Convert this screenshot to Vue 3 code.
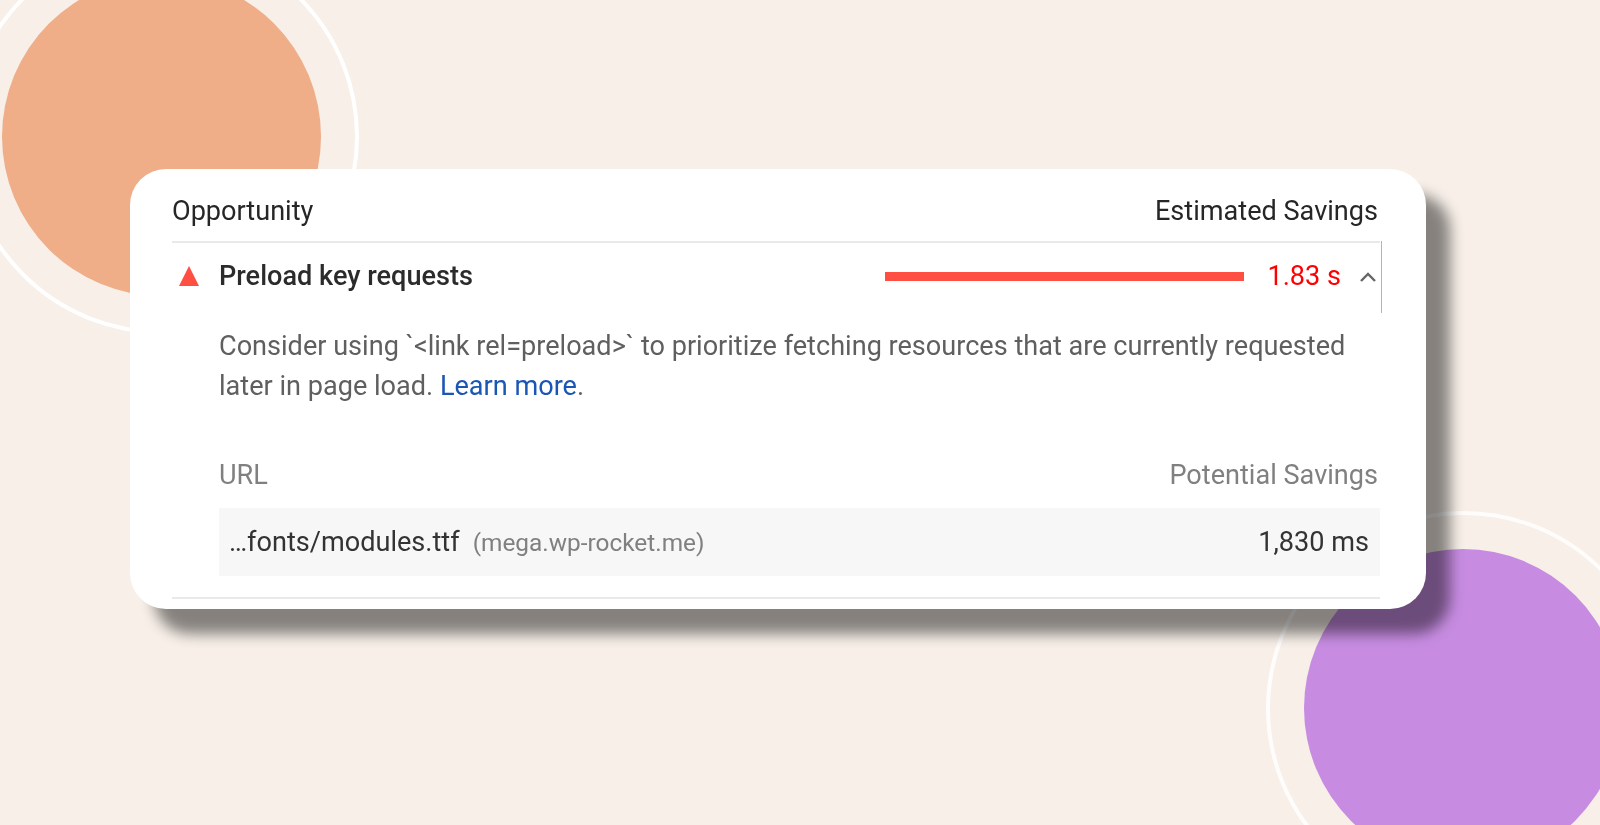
<script setup>
const header = { left: 'Opportunity', right: 'Estimated Savings' }
const audit = { title: 'Preload key requests', value: '1.83 s', bar: 100 }
</script>

<template>
  <main class="page">
    <div class="blob blob-orange"></div>
    <div class="ring ring-orange"></div>
    <div class="blob blob-purple"></div>
    <div class="ring ring-purple"></div>

    <section class="card">
      <header class="card-head">
        <span>{{ header.left }}</span>
        <span>{{ header.right }}</span>
      </header>

      <div class="audit">
        <div class="audit-row">
          <svg class="warn" viewBox="0 0 20 20" width="20" height="20" aria-hidden="true">
            <path d="M10 0 L20 20 L0 20 Z" fill="#ff4e42" />
          </svg>
          <span class="audit-title">{{ audit.title }}</span>
          <div class="bar-track"><div class="bar-fill" :style="{ width: audit.bar + '%' }"></div></div>
          <span class="audit-value">{{ audit.value }}</span>
          <svg class="chev" viewBox="0 0 16 10" width="16" height="10" aria-hidden="true">
            <path d="M1 9 L8 2 L15 9" fill="none" stroke="#666" stroke-width="2.4" />
          </svg>
        </div>
        <div class="focus-line"></div>

        <div class="audit-body">
          <p class="desc">
            Consider using `&lt;link rel=preload&gt;` to prioritize fetching resources that are currently requested
            later in page load. <a class="link">Learn more</a>.
          </p>
          <div class="table-head">
            <span>URL</span>
            <span>Potential Savings</span>
          </div>
          <div class="table-row">
            <span class="url-wrap">
              <span class="url">…fonts/modules.ttf</span>
              <span class="host">(mega.wp-rocket.me)</span>
            </span>
            <span class="ms">1,830 ms</span>
          </div>
        </div>
      </div>
      <div class="rule"></div>
    </section>
  </main>
</template>

<style>
html, body { margin: 0; background: #f7efe8; }
</style>

<style scoped>
.page {
  position: relative;
  width: 1600px;
  height: 825px;
  overflow: hidden;
  background: #f7efe8;
  font-family: Roboto, "Liberation Sans", sans-serif;
  padding: 169px 0 0 130px;
  box-sizing: border-box;
}
.blob, .ring { position: absolute; border-radius: 50%; box-sizing: border-box; }
.blob-orange { left: 2px; top: -23px; width: 319px; height: 319px; background: #efad88; }
.ring-orange { left: -36px; top: -61px; width: 395px; height: 395px; border: 4px solid #fff; }
.blob-purple { left: 1304px; top: 549px; width: 318px; height: 318px; background: #c78ce2; }
.ring-purple { left: 1266px; top: 511px; width: 395px; height: 395px; border: 4px solid #fff; opacity: .85; }

.card {
  position: relative;
  width: 1296px;
  height: 440px;
  box-sizing: border-box;
  padding: 0 46px 0 42px;
  background: #fff;
  border-radius: 36px;
  box-shadow: 24px 25px 14px rgba(0, 0, 0, .46);
  filter: blur(.5px);
}
.card-head {
  display: flex;
  justify-content: space-between;
  align-items: center;
  box-sizing: border-box;
  border-bottom: 2px solid #e9e9ea;
  height: 74px;
  padding: 12px 2px 0 0;
  font-size: 27.1px;
  color: #262626;
}
.audit { position: relative; }
.audit-row {
  display: flex;
  align-items: center;
  height: 68px;
  padding-left: 7px;
}
.warn { flex: none; margin-right: 20px; margin-top: -2px; }
.audit-title { font-size: 27.1px; font-weight: 500; color: #2b2b2b; flex: 1; margin-top: -3px; }
.bar-track { width: 359px; height: 9px; margin-top: -2px; }
.bar-fill { height: 100%; background: #ff4e42; }
.audit-value { font-size: 27.1px; color: #f00; margin-left: 23px; margin-top: -2px; }
.chev { flex: none; margin-left: 19px; margin-right: 4px; margin-top: -1px; }
.focus-line {
  position: absolute;
  top: -2px;
  right: -2px;
  width: 1px;
  height: 72px;
  background: #94b8f5;
}
.audit-body { padding-left: 47px; }
.desc {
  margin: 0;
  padding-top: 15px;
  font-size: 27.1px;
  line-height: 40px;
  color: #5f5f5f;
}
.link { color: #1a56b4; }
.table-head {
  display: flex;
  justify-content: space-between;
  align-items: center;
  margin-top: 49px;
  height: 40px;
  font-size: 27.1px;
  color: #808080;
  padding-right: 2px;
}
.table-row {
  display: flex;
  justify-content: space-between;
  align-items: center;
  margin-top: 13px;
  height: 68px;
  padding: 0 11px 0 10px;
  background: #f7f7f7;
}
.url { font-size: 27.1px; color: #333; }
.host { font-size: 24.4px; color: #808080; margin-left: 13px; }
.ms { font-size: 27.1px; color: #333; }
.rule {
  height: 2px;
  margin-top: 21px;
  background: #e9e9ea;
}
</style>
